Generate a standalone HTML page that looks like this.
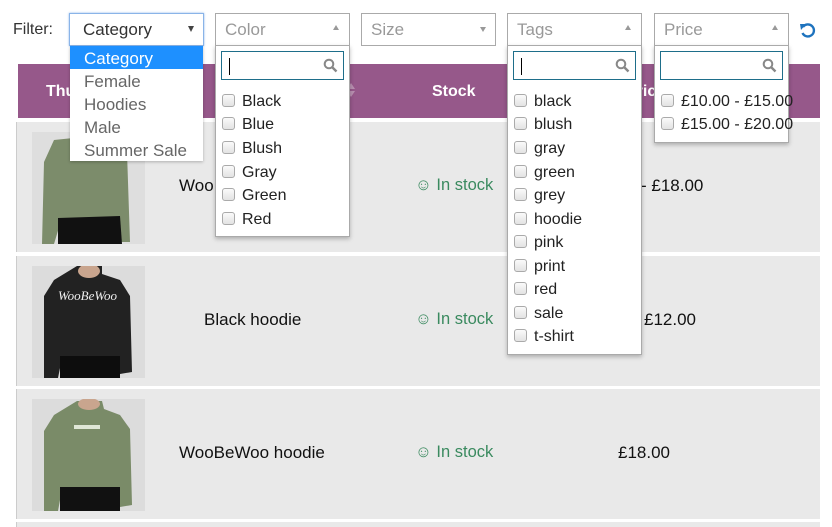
<!DOCTYPE html>
<html><head><meta charset="utf-8"><style>
*{box-sizing:border-box;margin:0;padding:0}
html,body{width:832px;height:527px;overflow:hidden}
body{background:#fff;position:relative;font-family:"Liberation Sans","DejaVu Sans",sans-serif;font-size:16px;color:#222}
.a{position:absolute}
.sel{position:absolute;top:13px;height:33px;width:135px;border:1px solid #aaa;background:#fff;color:#999;font-size:17px;padding:6px 0 0 9px;z-index:5}
.sel .ar{position:absolute;right:10px;top:11px;width:0;height:0;border-left:3px solid transparent;border-right:3px solid transparent;border-bottom:5px solid #999}
.panel{position:absolute;top:45px;width:135px;background:#fff;border:1px solid #aaa;box-shadow:0 2px 4px rgba(0,0,0,.25);z-index:5}
.srch{position:absolute;left:5px;top:5px;width:123px;height:29px;border:1px solid #1e6e8a;background:#fff}
.srch .cur{position:absolute;left:7px;top:6px;width:1px;height:17px;background:#000}
.srch svg{position:absolute;right:5px;top:6px}
.it{position:absolute;left:6px;font-size:16px;color:#222;white-space:nowrap}
.cb{display:inline-block;width:13px;height:13px;border:1px solid #aaa;border-radius:3px;background:linear-gradient(#fafafa,#e3e3e3);vertical-align:-1px;margin-right:7px}
.row{position:absolute;left:16px;width:804px;height:130px;background:#e9e9e9;border-left:1px solid #ccc}
.row .t{position:absolute;top:54px;font-size:17px;color:#111}
.row .s{position:absolute;left:398px;top:54px;color:#3a8a5f;font-size:16.5px}
.img{position:absolute;left:15px;top:10px;width:113px;height:112px}
</style></head><body>
<div class="a" style="left:13px;top:21px;color:#333">Filter:</div>
<div class="sel" style="left:69px;border-color:#8ab4e8;color:#333;box-shadow:0 0 2px #8ab4e8;padding-left:13px">Category<span style="position:absolute;right:9px;top:12px;width:0;height:0;border-left:3.5px solid transparent;border-right:3.5px solid transparent;border-top:6px solid #444"></span></div>
<div class="a" style="left:70px;top:46px;width:133px;height:115px;background:#fff;box-shadow:0 1px 3px rgba(0,0,0,.25);color:#666;z-index:10">
<div style="background:#1e90ff;color:#fff;height:23px;padding:3px 0 0 14px;font-size:17px">Category</div>
<div style="height:23px;padding:3px 0 0 14px;font-size:17px">Female</div>
<div style="height:23px;padding:3px 0 0 14px;font-size:17px">Hoodies</div>
<div style="height:23px;padding:3px 0 0 14px;font-size:17px">Male</div>
<div style="height:23px;padding:3px 0 0 14px;font-size:17px">Summer Sale</div>
</div>

<!-- table -->
<div class="a" style="left:18px;top:64px;width:802px;height:54px;background:#96588a;color:#fff;font-weight:bold">
<div class="a" style="left:28px;top:19px">Thumb</div>
<div class="a" style="left:414px;top:19px">Stock</div>
<div class="a" style="left:608px;top:19px">Price</div>
<div class="a" style="left:329px;top:19px;width:0;height:0;border-left:4px solid transparent;border-right:4px solid transparent;border-bottom:6px solid #b88fb0"></div>
<div class="a" style="left:329px;top:27px;width:0;height:0;border-left:4px solid transparent;border-right:4px solid transparent;border-top:6px solid #b88fb0"></div>
</div>

<div class="row" style="top:122px">
<svg class="img" viewBox="0 0 113 112"><rect width="113" height="112" fill="#dedede"/><path d="M22 8 L80 2 L95 20 L98 110 L85 110 L85 90 L28 92 L22 112 L10 112 L12 30 Z" fill="#7c8c6b"/><path d="M26 86 L88 84 L90 112 L26 112 Z" fill="#111"/></svg>
<div class="t" style="left:162px">WooBeWoo hoodie</div>
<div class="s">☺ In stock</div>
<div class="t" style="left:624px">- £18.00</div>
</div>
<div class="row" style="top:256px">
<svg class="img" viewBox="0 0 113 112"><rect width="113" height="112" fill="#dcdcdc"/><path d="M45 0 L70 0 L70 8 L88 14 L98 30 L100 106 L88 108 L86 90 L30 92 L26 112 L12 112 L12 30 L22 14 Z" fill="#222"/><ellipse cx="57" cy="5" rx="11" ry="7" fill="#c9a58e"/><path d="M28 90 L88 90 L88 112 L28 112 Z" fill="#0d0d0d"/><text x="26" y="34" font-family="Liberation Serif,serif" font-style="italic" font-size="13" fill="#eee">WooBeWoo</text></svg>
<div class="t" style="left:187px">Black hoodie</div>
<div class="s">☺ In stock</div>
<div class="t" style="left:627px">£12.00</div>
</div>
<div class="row" style="top:389px">
<svg class="img" viewBox="0 0 113 112"><rect width="113" height="112" fill="#dcdcdc"/><path d="M45 2 L70 2 L72 10 L88 16 L98 30 L100 106 L88 108 L86 88 L30 90 L26 112 L12 112 L12 32 L22 16 Z" fill="#7a8b68"/><ellipse cx="57" cy="5" rx="11" ry="6" fill="#c9a58e"/><path d="M28 88 L88 88 L88 112 L28 112 Z" fill="#111"/><rect x="42" y="26" width="26" height="4" fill="#dfe6d6"/></svg>
<div class="t" style="left:162px">WooBeWoo hoodie</div>
<div class="s">☺ In stock</div>
<div class="t" style="left:601px">£18.00</div>
</div>
<div class="row" style="top:522px;height:5px"></div>

<!-- selects -->
<div class="sel" style="left:215px">Color<span class="ar"></span></div>
<div class="sel" style="left:361px">Size<span style="position:absolute;right:9px;top:13px;width:0;height:0;border-left:3px solid transparent;border-right:3px solid transparent;border-top:5px solid #999"></span></div>
<div class="sel" style="left:507px">Tags<span class="ar"></span></div>
<div class="sel" style="left:654px">Price<span class="ar"></span></div>
<svg class="a" style="left:799px;top:22px" width="18" height="18" viewBox="0 0 18 18"><path d="M4 5 A6 6 0 1 1 3.5 11" fill="none" stroke="#1e73be" stroke-width="2.4"/><path d="M1 2 L7 2 L2 8 Z" fill="#1e73be"/></svg>

<div class="panel" style="left:215px;height:192px">
<div class="srch"><span class="cur"></span><svg width="15" height="15" viewBox="0 0 15 15"><circle cx="6" cy="6" r="4.3" fill="none" stroke="#888" stroke-width="2"/><path d="M9 9 L13.5 13.5" stroke="#888" stroke-width="2.4"/></svg></div>
<div class="it" style="top:47px"><span class="cb"></span>Black</div>
<div class="it" style="top:70px"><span class="cb"></span>Blue</div>
<div class="it" style="top:94px"><span class="cb"></span>Blush</div>
<div class="it" style="top:118px"><span class="cb"></span>Gray</div>
<div class="it" style="top:141px"><span class="cb"></span>Green</div>
<div class="it" style="top:165px"><span class="cb"></span>Red</div>
</div>

<div class="panel" style="left:507px;height:310px">
<div class="srch"><span class="cur"></span><svg width="15" height="15" viewBox="0 0 15 15"><circle cx="6" cy="6" r="4.3" fill="none" stroke="#888" stroke-width="2"/><path d="M9 9 L13.5 13.5" stroke="#888" stroke-width="2.4"/></svg></div>
<div class="it" style="top:47px"><span class="cb"></span>black</div>
<div class="it" style="top:70px"><span class="cb"></span>blush</div>
<div class="it" style="top:94px"><span class="cb"></span>gray</div>
<div class="it" style="top:118px"><span class="cb"></span>green</div>
<div class="it" style="top:141px"><span class="cb"></span>grey</div>
<div class="it" style="top:165px"><span class="cb"></span>hoodie</div>
<div class="it" style="top:188px"><span class="cb"></span>pink</div>
<div class="it" style="top:212px"><span class="cb"></span>print</div>
<div class="it" style="top:235px"><span class="cb"></span>red</div>
<div class="it" style="top:259px"><span class="cb"></span>sale</div>
<div class="it" style="top:282px"><span class="cb"></span>t-shirt</div>
</div>

<div class="panel" style="left:654px;height:98px">
<div class="srch"><svg width="15" height="15" viewBox="0 0 15 15"><circle cx="6" cy="6" r="4.3" fill="none" stroke="#888" stroke-width="2"/><path d="M9 9 L13.5 13.5" stroke="#888" stroke-width="2.4"/></svg></div>
<div class="it" style="top:47px"><span class="cb"></span>£10.00 - £15.00</div>
<div class="it" style="top:70px"><span class="cb"></span>£15.00 - £20.00</div>
</div>
</body></html>
